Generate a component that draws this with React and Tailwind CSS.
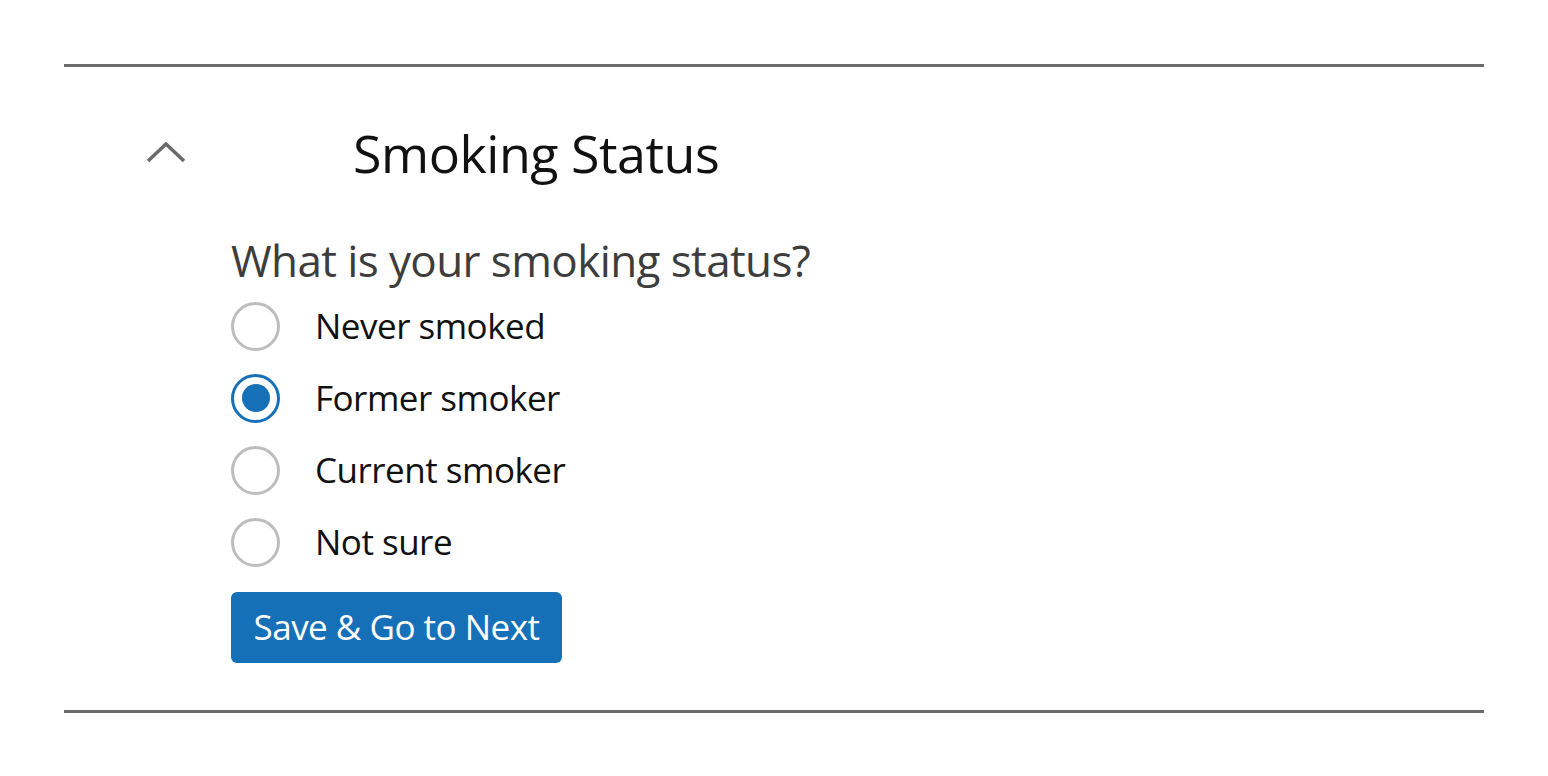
import React, { useState } from "react";

const options = ["Never smoked", "Former smoker", "Current smoker", "Not sure"];

const Radio = ({ checked }) => (
	<span
		className={`flex items-center justify-center w-[49px] h-[49px] rounded-full border-[3px] bg-white ${
			checked ? "border-[#1670b8]" : "border-[#bdbdbd]"
		}`}
	>
		{checked && <span className="block w-[28px] h-[28px] rounded-full bg-[#1670b8]" />}
	</span>
);

const App = () => {
	const [open, setOpen] = useState(true);
	const [status, setStatus] = useState("Former smoker");

	return (
		<div
			className="w-full bg-white px-[64px] pt-[64px]"
			style={{ fontFamily: '"Open Sans", "Noto Sans", sans-serif' }}
		>
			<div className="border-t-[3px] border-b-[3px] border-[#6b6b6b]">
				{/* header */}
				<div className="flex items-center h-[60px] mt-[56px]">
					<button
						className="w-[40px] ml-[82px] flex justify-center"
						onClick={() => setOpen(!open)}
					>
						<svg width="40" height="22" viewBox="0 0 40 22" fill="none">
							<path
								d={open ? "M2 19 L20 2 L38 19" : "M2 3 L20 20 L38 3"}
								stroke="#6a6a6a"
								strokeWidth="3.5"
							/>
						</svg>
					</button>
					<h2 className="ml-[167px] text-[52px] leading-[60px] text-[#111] tracking-[-0.5px]">
						Smoking Status
					</h2>
				</div>

				{open && (
					<div className="pl-[167px] pt-[47px] pb-[47px]">
						<p className="text-[44px] leading-[60px] text-[#3d3d3d] tracking-[-0.6px]">
							What is your smoking status?
						</p>
						<div className="flex flex-col">
							{options.map((opt) => (
								<label
									key={opt}
									className="flex items-center h-[72px] cursor-pointer"
									onClick={() => setStatus(opt)}
								>
									<Radio checked={status === opt} />
									<span className="ml-[35px] text-[35px] text-[#111] tracking-[-0.5px]">{opt}</span>
								</label>
							))}
						</div>
						<button className="mt-[14px] h-[71px] w-[331px] rounded-[6px] bg-[#1670b8] text-white text-[35px] tracking-[-0.5px]">
							Save &amp; Go to Next
						</button>
					</div>
				)}
			</div>
		</div>
	);
};

export default App;
